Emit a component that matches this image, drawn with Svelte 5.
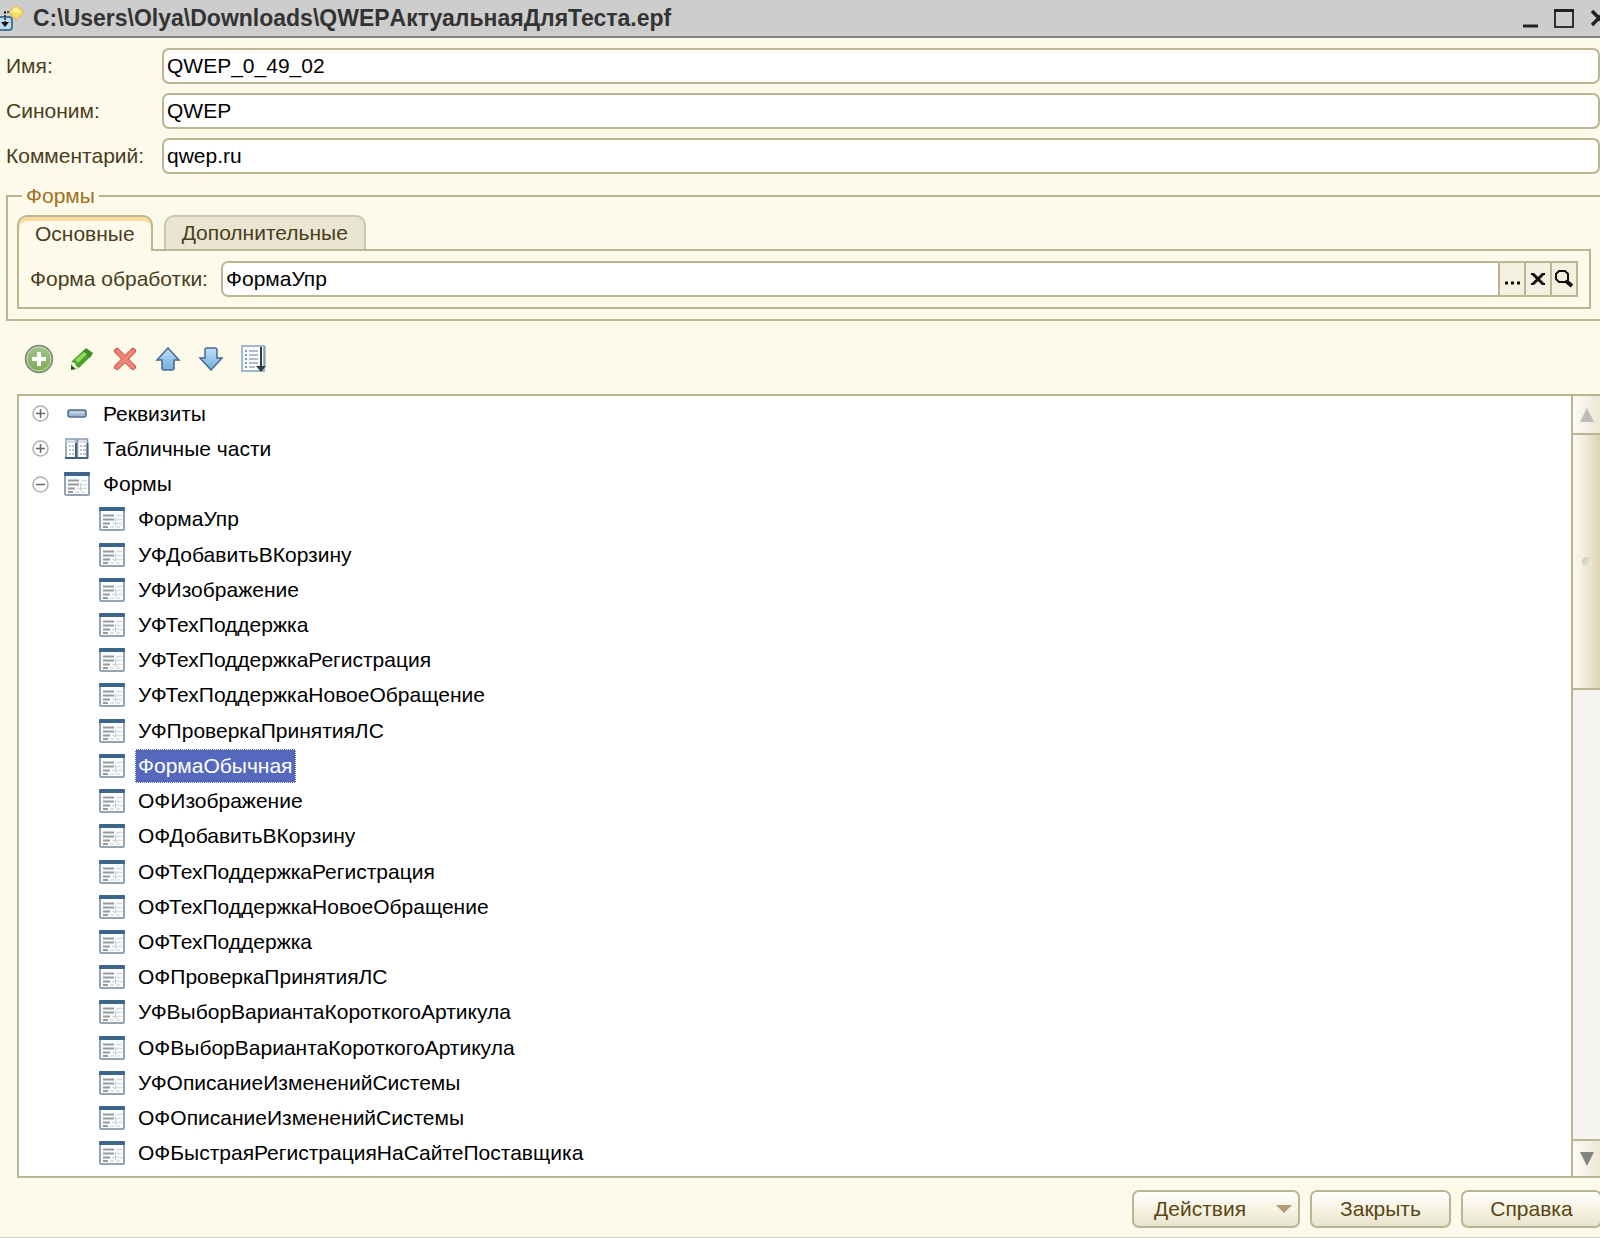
<script>
  let name = 'QWEP_0_49_02'
  let synonym = 'QWEP'
  let comment = 'qwep.ru'
  let mainForm = 'ФормаУпр'
  let activeTab = 'main'
  let selected = 'ФормаОбычная'

  const groups = [
    { label: 'Реквизиты', icon: 'attribute', open: false },
    { label: 'Табличные части', icon: 'table', open: false },
    { label: 'Формы', icon: 'form', open: true },
  ]

  const forms = [
    'ФормаУпр',
    'УФДобавитьВКорзину',
    'УФИзображение',
    'УФТехПоддержка',
    'УФТехПоддержкаРегистрация',
    'УФТехПоддержкаНовоеОбращение',
    'УФПроверкаПринятияЛС',
    'ФормаОбычная',
    'ОФИзображение',
    'ОФДобавитьВКорзину',
    'ОФТехПоддержкаРегистрация',
    'ОФТехПоддержкаНовоеОбращение',
    'ОФТехПоддержка',
    'ОФПроверкаПринятияЛС',
    'УФВыборВариантаКороткогоАртикула',
    'ОФВыборВариантаКороткогоАртикула',
    'УФОписаниеИзмененийСистемы',
    'ОФОписаниеИзмененийСистемы',
    'ОФБыстраяРегистрацияНаСайтеПоставщика',
  ]
</script>

<svelte:head>
  <title>QWEPАктуальнаяДляТеста.epf</title>
</svelte:head>

{#snippet formIcon()}
  <svg class="node-icon" width="26" height="24" viewBox="0 0 26 24" aria-hidden="true">
    <rect x="1" y="1" width="24" height="22" rx="1" fill="#fbfcfd" stroke="#93a3b3" stroke-width="2" />
    <rect x="0" y="0" width="26" height="4" rx="1" fill="#3d658c" />
    <path d="M4 8.5h11M4 12.5h11M4 16.5h7M4 20h5" stroke="#999" stroke-width="2" />
    <path d="M17 8.5h6M17 12.5h6M13 16.5h10M11 20h4M17 20h4" stroke="#dcdcdc" stroke-width="1.5" />
    <path d="M16.5 11v8" stroke="#ccc" />
  </svg>
{/snippet}

<div class="window">
  <header class="titlebar">
    <svg class="app-icon" width="25" height="34" viewBox="0 0 25 34" aria-hidden="true">
      <rect x="-9" y="16" width="21" height="13" rx="3" fill="#b9daf1" stroke="#4d7592" stroke-width="2" />
      <path d="M5 11v10M4 11h8" fill="none" stroke="#222" stroke-width="1.5" stroke-dasharray="2 1" />
      <path d="M1 21h8l-4 5z" fill="#111" />
      <path d="M16 4l8 7-8 8-7-8z" fill="#f7df5c" stroke="#d9b95a" />
      <path d="M16 6l5 5-5 1-4-2z" fill="#fff3a6" />
    </svg>
    <h1>C:\Users\Olya\Downloads\QWEPАктуальнаяДляТеста.epf</h1>
    <div class="window-buttons">
      <button aria-label="Свернуть">
        <svg width="20" height="22" viewBox="0 0 20 22"><path d="M3 19h15" stroke="#222" stroke-width="3" /></svg>
      </button>
      <button aria-label="Развернуть">
        <svg width="20" height="22" viewBox="0 0 20 22">
          <path d="M1 3v17h18V3" fill="none" stroke="#333" stroke-width="2" />
          <path d="M0 3.5h20" stroke="#222" stroke-width="3" />
        </svg>
      </button>
      <button aria-label="Закрыть окно">
        <svg width="20" height="22" viewBox="0 0 20 22">
          <path d="M4 4l14 14M18 4L4 18" stroke="#222" stroke-width="3.5" />
        </svg>
      </button>
    </div>
  </header>

  <div class="fields">
    <label for="name">Имя:</label>
    <input type="text" id="name" bind:value={name} />
    <label for="synonym">Синоним:</label>
    <input type="text" id="synonym" bind:value={synonym} />
    <label for="comment">Комментарий:</label>
    <input type="text" id="comment" bind:value={comment} />
  </div>

  <fieldset>
    <legend>Формы</legend>
    <div class="tabs" role="tablist">
      <button class="tab" class:active={activeTab === 'main'} role="tab" aria-selected={activeTab === 'main'} on:click={() => (activeTab = 'main')}>Основные</button>
      <button class="tab" class:active={activeTab === 'extra'} role="tab" aria-selected={activeTab === 'extra'} on:click={() => (activeTab = 'extra')}>Дополнительные</button>
    </div>
    <div class="panel" role="tabpanel">
      <label for="main-form">Форма обработки:</label>
      <div class="picker">
        <input type="text" id="main-form" bind:value={mainForm} />
        <button aria-label="Выбрать">
          <svg width="16" height="16" viewBox="0 0 16 16"><path d="M1 12h3M7 12h3M13 12h3" stroke="#111" stroke-width="3" /></svg>
        </button>
        <button aria-label="Очистить" on:click={() => (mainForm = '')}>
          <svg width="16" height="16" viewBox="0 0 16 16">
            <path d="M3 3l10 10M13 3L3 13" stroke="#111" stroke-width="3" />
            <path d="M1 3h3M12 3h3M1 13h3M12 13h3" stroke="#111" stroke-width="2" />
          </svg>
        </button>
        <button aria-label="Открыть">
          <svg width="20" height="20" viewBox="0 0 20 20">
            <path d="M5 2h6l3 3v6l-3 2H5l-3-3V5z" fill="none" stroke="#111" stroke-width="2" />
            <path d="M12 12l6 5" stroke="#111" stroke-width="4" />
          </svg>
        </button>
      </div>
    </div>
  </fieldset>

  <div class="toolbar">
    <button aria-label="Добавить">
      <svg width="30" height="30" viewBox="0 0 30 30">
        <defs>
          <linearGradient id="green" x1="0" y1="0" x2="0" y2="1">
            <stop offset="0" stop-color="#a3c48b" />
            <stop offset="1" stop-color="#7cab56" />
          </linearGradient>
        </defs>
        <circle cx="15" cy="15" r="13.5" fill="url(#green)" stroke="#828a7c" stroke-width="1.5" />
        <circle cx="15" cy="15" r="12" fill="none" stroke="#c3dab2" />
        <path d="M15 8v14M8 15h14" stroke="#fff" stroke-width="4" />
      </svg>
    </button>
    <button aria-label="Изменить">
      <svg width="24" height="24" viewBox="0 0 24 24">
        <path d="M1 23l1-9L14 3l7 6L9 21z" fill="#49a329" />
        <path d="M16 1l7 5-3 5-7-7z" fill="#438a2b" />
        <path d="M5 13l9-8 3 2-9 9z" fill="#93d765" />
        <path d="M1 23l1-8 3 1 1 3 3 2z" fill="#f1f5dc" />
        <path d="M1 23v-5l5 4z" fill="#245a15" />
      </svg>
    </button>
    <button aria-label="Удалить">
      <svg width="24" height="24" viewBox="0 0 24 24">
        <path d="M4 4l16 16M20 4L4 20" stroke="#cb5549" stroke-width="6" stroke-linecap="round" />
        <path d="M4 4l16 16M20 4L4 20" stroke="#ec8478" stroke-width="4" stroke-linecap="round" />
      </svg>
    </button>
    <button aria-label="Вверх">
      <svg width="26" height="24" viewBox="0 0 26 24">
        <defs>
          <linearGradient id="blue" x1="0" y1="0" x2="0" y2="1">
            <stop offset="0" stop-color="#c3e0f6" />
            <stop offset="1" stop-color="#6faee0" />
          </linearGradient>
        </defs>
        <path d="M13 1l11 12h-5v8q0 2-2 2H9q-2 0-2-2v-8H2z" fill="url(#blue)" stroke="#47698c" stroke-width="1.5" />
      </svg>
    </button>
    <button aria-label="Вниз">
      <svg width="26" height="24" viewBox="0 0 26 24">
        <path d="M13 23L2 11h5V3q0-2 2-2h8q2 0 2 2v8h5z" fill="url(#blue)" stroke="#47698c" stroke-width="1.5" />
      </svg>
    </button>
    <button aria-label="Порядок">
      <svg width="26" height="28" viewBox="0 0 26 28">
        <rect x="1" y="1" width="22" height="25" fill="#f9fbfd" stroke="#a3b9cb" stroke-width="2" />
        <path d="M4 6h2M4 10h2M4 14h2M4 18h2M4 22h2" stroke="#6f9cc3" stroke-width="2" />
        <path d="M8 6h9M8 10h9M8 14h9M8 18h9M8 22h6" stroke="#b3bcc6" stroke-width="2" />
        <path d="M20 2v20" stroke="#fff" stroke-width="4" />
        <path d="M20 2v20" stroke="#2b3e50" stroke-width="2" />
        <path d="M24 1v20" stroke="#7b8894" />
        <path d="M15 21h10l-5 6z" fill="#2b3e50" />
      </svg>
    </button>
  </div>

  <div class="tree">
    <ul>
      {#each groups as group}
        <li class="group">
          <button class="toggle" aria-label={group.label} aria-expanded={group.open}>
            <svg width="17" height="17" viewBox="0 0 17 17">
              <circle cx="8.5" cy="8.5" r="7.5" fill="#fff" stroke="#b0b0b0" stroke-width="1.5" />
              <path d={group.open ? 'M4 8.5h9' : 'M4 8.5h9M8.5 4v9'} stroke="#666" stroke-width="1.5" />
            </svg>
          </button>
          {#if group.icon === 'attribute'}
            <svg class="node-icon" width="26" height="24" viewBox="0 0 26 24" aria-hidden="true">
              <rect x="4" y="8" width="18" height="7" rx="2" fill="#9fb9d2" stroke="#4f6e8d" stroke-width="1.5" />
              <path d="M6 10.5h14" stroke="#c8d8e7" stroke-width="2" />
            </svg>
          {:else if group.icon === 'table'}
            <svg class="node-icon" width="26" height="24" viewBox="0 0 26 24" aria-hidden="true">
              <rect x="2" y="2" width="10" height="19" fill="#fff" stroke="#8296ac" stroke-width="1.5" />
              <rect x="13.5" y="2" width="10" height="19" fill="#fff" stroke="#8296ac" stroke-width="1.5" />
              <path d="M2 4.5h10M14 4.5h9" stroke="#c6d2de" stroke-width="2" />
              <path d="M1 21h23M12 6v15M23.5 6v15" stroke="#47607f" stroke-width="2" />
              <path d="M5 9h2M8 9h2M5 13h2M8 13h2M5 17h2M8 17h2M16 9h2M19 9h3M16 13h2M19 13h3M16 17h2M19 17h3" stroke="#a6b0bc" stroke-width="1.5" />
            </svg>
          {:else}
            {@render formIcon()}
          {/if}
          <span class="node">{group.label}</span>
        </li>
      {/each}
      {#each forms as form}
        <li class="child">
          {@render formIcon()}
          <button class="node" class:selected={form === selected} on:click={() => (selected = form)}>{form}</button>
        </li>
      {/each}
    </ul>

    <div class="scrollbar">
      <button class="scroll-up" aria-label="Прокрутить вверх">
        <svg width="14" height="14" viewBox="0 0 14 14"><path d="M7 0l7 14H0z" fill="#bdbdb8" /></svg>
      </button>
      <div class="thumb"><span></span></div>
      <button class="scroll-down" aria-label="Прокрутить вниз">
        <svg width="14" height="14" viewBox="0 0 14 14"><path d="M0 0h14L7 14z" fill="#85857f" /></svg>
      </button>
    </div>
  </div>

  <footer>
    <button class="btn btn-menu">
      Действия
      <svg width="16" height="8" viewBox="0 0 16 8" aria-hidden="true"><path d="M0 0h16L8 8z" fill="#b39a78" /></svg>
    </button>
    <button class="btn">Закрыть</button>
    <button class="btn">Справка</button>
  </footer>
</div>

<style>
  .window {
    display: flex;
    flex-direction: column;
    box-sizing: border-box;
    min-height: 100vh;
    overflow: hidden;
    background: #fcfaeb;
    border-bottom: 1px solid #d3d0bf;
    color: #4b3d20;
    font-family: "Liberation Sans", Arial, sans-serif;
    font-size: 21px;
    line-height: 28px;
  }

  button,
  input {
    box-sizing: border-box;
    margin: 0;
    padding: 0;
    border: none;
    background: none;
    color: inherit;
    font: inherit;
  }

  svg {
    display: block;
    flex: none;
  }

  .titlebar {
    display: flex;
    align-items: center;
    height: 36px;
    background: #cdcdcd;
    border-bottom: 2px solid #858585;
    color: #333;
  }

  h1 {
    flex: 1;
    margin: 0 0 0 8px;
    font-size: 23px;
    line-height: 28px;
    white-space: nowrap;
  }

  .window-buttons {
    display: flex;
    gap: 14px;
    margin-right: -8px;
  }

  .fields {
    display: grid;
    grid-template-columns: 156px 1fr;
    align-items: center;
    row-gap: 9px;
    padding: 10px 0 0 6px;
  }

  input {
    width: 100%;
    min-width: 0;
    height: 36px;
    padding: 0 3px;
    border: 2px solid #bcb592;
    border-radius: 7px;
    background: #fff;
    color: #000;
  }

  fieldset {
    min-width: 0;
    margin: 8px -2px 0 6px;
    padding: 5px 9px 10px;
    border: 2px solid #bcb592;
  }

  legend {
    margin-left: 5px;
    padding: 0 4px;
    color: #a3701f;
  }

  .tabs {
    display: flex;
    gap: 11px;
  }

  .tab {
    height: 34px;
    padding: 0 16px;
    border: 2px solid #cdc8ad;
    border-bottom: none;
    border-radius: 10px 10px 0 0;
    background: #e9e5d0;
  }

  .tab.active {
    z-index: 1;
    height: 36px;
    margin-bottom: -2px;
    border-color: #bcb592;
    background: #fcfaeb;
    box-shadow: inset 0 4px #fbdc9c;
  }

  .panel {
    display: flex;
    align-items: center;
    padding: 10px 11px;
    border: 2px solid #bcb592;
  }

  .panel label {
    width: 191px;
    flex: none;
  }

  .picker {
    display: flex;
    flex: 1;
  }

  .picker input {
    flex: 1;
    border-radius: 7px 0 0 7px;
  }

  .picker button {
    display: flex;
    align-items: center;
    justify-content: center;
    width: 26px;
    border: 2px solid #bcb592;
    border-left: none;
    background: #f3f0df;
  }

  .toolbar {
    display: flex;
    gap: 13px;
    padding: 23px 0 20px 24px;
  }

  .toolbar button {
    display: flex;
    align-items: center;
    justify-content: center;
    width: 30px;
    height: 30px;
  }

  .tree {
    display: flex;
    flex: 1;
    margin-left: 17px;
    border: 2px solid #bcb592;
    border-right: none;
    background: #fff;
    color: #000;
  }

  ul {
    display: grid;
    grid-auto-rows: 1fr;
    flex: 1;
    margin: 0;
    padding: 0 0 5px 13px;
    list-style: none;
  }

  li {
    display: flex;
    align-items: center;
  }

  .toggle {
    margin-right: 15px;
  }

  .child {
    padding-left: 67px;
  }

  .node-icon {
    margin-right: 10px;
  }

  .node {
    padding: 2px;
    border: 1px solid transparent;
    white-space: nowrap;
  }

  .selected {
    border: 1px dotted #fff;
    background: #5668bd;
    color: #fff;
  }

  .scrollbar {
    display: flex;
    flex-direction: column;
    width: 29px;
    box-sizing: border-box;
    border-left: 2px solid #bcb592;
    background: #f6f5f2;
  }

  .scrollbar button {
    display: flex;
    align-items: center;
    justify-content: center;
    height: 37px;
    background: linear-gradient(90deg, #fbfbf7, #ece8d4);
  }

  .thumb {
    box-sizing: border-box;
    display: flex;
    align-items: center;
    justify-content: center;
    height: 33%;
    border: solid #bcb592;
    border-width: 2px 0;
    background: linear-gradient(90deg, #fafaf4, #eeead6 50%, #ddd3b5);
  }

  .thumb span {
    width: 10px;
    height: 10px;
    border-radius: 50%;
    background: linear-gradient(135deg, #c5c2b3, #f7f4e6);
  }

  .scrollbar .scroll-down {
    margin-top: auto;
    border-top: 2px solid #bcb592;
  }

  footer {
    display: flex;
    justify-content: flex-end;
    gap: 10px;
    margin-right: -2px;
    padding: 12px 0 9px;
  }

  .btn {
    width: 141px;
    height: 38px;
    border: 2px solid #bcb592;
    border-radius: 7px;
    background: linear-gradient(#fff, #f6f3e3 50%, #e8e4cd);
    color: #5a4514;
  }

  .btn-menu {
    display: flex;
    align-items: center;
    justify-content: space-between;
    width: 168px;
    padding: 0 6px 0 20px;
  }
</style>
